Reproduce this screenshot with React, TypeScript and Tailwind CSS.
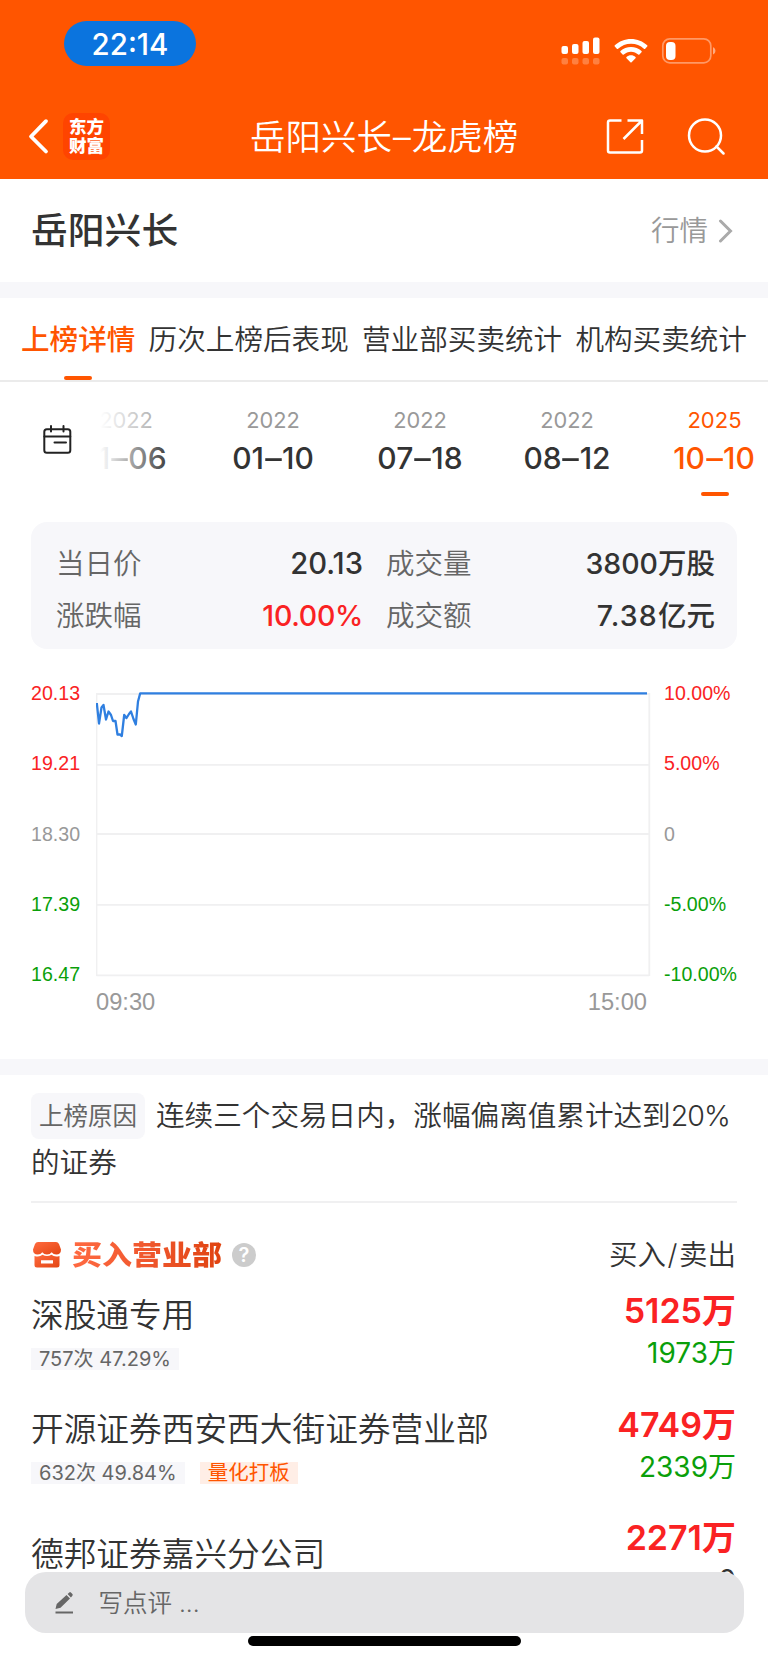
import type { ReactNode } from "react";

const dates = [
  { year: "2022", day: "11–06" },
  { year: "2022", day: "01–10" },
  { year: "2022", day: "07–18" },
  { year: "2022", day: "08–12" },
  { year: "2025", day: "10–10", active: true },
];

const axis = [
  { price: "20.13", pct: "10.00%", color: "text-[#fa2223]" },
  { price: "19.21", pct: "5.00%", color: "text-[#fa2223]" },
  { price: "18.30", pct: "0", color: "text-[#999]" },
  { price: "17.39", pct: "-5.00%", color: "text-[#0a9f0a]" },
  { price: "16.47", pct: "-10.00%", color: "text-[#0a9f0a]" },
];

const tabs = ["上榜详情", "历次上榜后表现", "营业部买卖统计", "机构买卖统计"];

function StatusBar() {
  return (
    <div className="flex h-[95px] items-start pl-16 pr-[52px]">
      <div className="mt-[21px] flex h-[45px] w-[132px] items-center justify-center rounded-full bg-[#0b74de] pt-0.5 text-[29.500px] font-medium leading-none">
        22:14
      </div>
      <svg className="ml-auto mt-[37px]" width="155" height="29" viewBox="0 0 155 29" fill="#fff">
        <rect x="0.5" y="9" width="6.500" height="8" rx="2" />
        <rect x="11" y="7" width="6.500" height="10" rx="2" />
        <rect x="21.5" y="4" width="6.500" height="13" rx="2" />
        <rect x="32" y="0.5" width="6.500" height="16.5" rx="2" />
        <g opacity="0.25">
          <rect x="0.5" y="21" width="6.500" height="6.5" rx="2" />
          <rect x="11" y="21" width="6.500" height="6.5" rx="2" />
          <rect x="21.5" y="21" width="6.500" height="6.5" rx="2" />
          <rect x="32" y="21" width="6.500" height="6.5" rx="2" />
        </g>
        <path d="M70 2c6.200 0 11.900 2.400 16.200 6.300.4.400.4.900 0 1.300l-2 2.100c-.4.400-.9.400-1.300 0A18.800 18.800 0 0 0 70 6.700c-5 0-9.500 1.900-12.900 5-.4.400-.9.400-1.300 0l-2-2.100c-.4-.4-.4-.9 0-1.300C58.100 4.400 63.800 2 70 2Z" />
        <path d="M70 10c4 0 7.700 1.500 10.500 4.100.4.400.4.800 0 1.200l-2.100 2.200c-.4.400-.8.400-1.200 0-1.900-1.700-4.400-2.800-7.200-2.800s-5.300 1.100-7.200 2.800c-.4.400-.8.400-1.200 0l-2.100-2.200c-.4-.4-.4-.8 0-1.200C62.300 11.500 66 10 70 10Z" />
        <path d="M70 18.300c1.700 0 3.300.6 4.500 1.700.4.300.4.800 0 1.200l-3.900 4.100c-.4.400-.8.400-1.200 0l-3.900-4.100c-.4-.4-.4-.9 0-1.200 1.200-1.100 2.800-1.700 4.500-1.700Z" />
        <rect x="101.800" y="1.800" width="48" height="24" rx="7" fill="none" stroke="#fff" strokeOpacity="0.4" strokeWidth="1.700" />
        <rect x="105" y="5" width="9.500" height="18" rx="4" />
        <path d="M152 10.200c1.600.6 2.400 2 2.400 3.600s-.8 3-2.400 3.600Z" opacity="0.5" />
      </svg>
    </div>
  );
}

function NavBar() {
  return (
    <div className="grid h-[84px] grid-cols-[222px_auto_1fr] items-center pl-7 pr-[43px]">
      <div className="flex items-center">
        <svg width="22" height="38" viewBox="0 0 22 38" fill="none" stroke="#fff" strokeWidth="3.800" strokeLinecap="round" strokeLinejoin="round">
          <path d="M18 3.200 3 18.500l15 15" />
        </svg>
        <div className="ml-[13px] -mt-0.5 size-[47px] rounded-[10px] bg-[#ff4400] pt-[3px] text-center font-['Noto_Sans_CJK_SC'] text-[17.500px] font-black leading-[19px]">
          东方
          <br />
          财富
        </div>
      </div>
      <div className="whitespace-nowrap pt-px text-[35.500px] font-[350] leading-none">
        岳阳兴长<span className="mx-px">–</span>龙虎榜
      </div>
      <div className="flex items-center justify-end gap-[43px]">
        <svg width="38" height="38" viewBox="0 0 38 38" fill="none" stroke="#fff" strokeWidth="2.500" strokeLinejoin="round" strokeLinecap="butt">
          <path d="M15.500 2.500H4Q2 2.500 2 4.500v28q0 2 2 2h30q2 0 2-2V22M21.500 2.500H36V16M35.500 3 17.500 21" />
        </svg>
        <svg width="38" height="38" viewBox="0 0 38 38" fill="none" stroke="#fff" strokeWidth="2.500">
          <circle cx="18" cy="17.500" r="16" />
          <path d="m29.500 28.500 7 7" strokeLinecap="round" />
        </svg>
      </div>
    </div>
  );
}

function DateStrip() {
  return (
    <div className="relative flex h-[140px] overflow-hidden pl-[52.500px]">
      {dates.map((d) => (
        <div
          key={d.day}
          className={
            d.active
              ? "flex w-[147px] shrink-0 flex-col items-center text-[#ff5500]"
              : "flex w-[147px] shrink-0 flex-col items-center text-[#333]"
          }
        >
          <span className={d.active ? "mt-[23px] pl-px text-[22px] leading-[31px]" : "mt-[23px] text-[21.800px] leading-[31px] text-[#999]"}>
            {d.year}
          </span>
          <span className="mt-[2px] text-[30px] font-medium leading-[40px]">
            {d.day.slice(0, 2)}
            <span className="mx-[1.500px] inline-block scale-x-110">–</span>
            {d.day.slice(3)}
          </span>
          {d.active && <span className="ml-0.5 mt-[14px] h-[3.500px] w-7 rounded-full bg-[#ff5500]" />}
        </div>
      ))}
      {/* left fade with the calendar button on top */}
      <div className="absolute inset-y-0 left-0 flex w-[172px]">
        <div className="w-[100px] bg-white pl-[42px] pt-[43px]">
          <svg width="30" height="30" viewBox="0 0 30 30" fill="none" stroke="#222" strokeWidth="2">
            <rect x="2.300" y="4.300" width="26" height="23.500" rx="2.500" />
            <path d="M2.300 11.500h26M9 1v5.500M21.500 1v5.500M12.500 17.500H24" strokeLinecap="round" />
          </svg>
        </div>
        <div className="flex-1 bg-linear-to-r from-white to-white/0" />
      </div>
    </div>
  );
}

function StatCell({ label, children }: { label: string; children: ReactNode }) {
  return (
    <div className="flex items-center justify-between">
      <span className="font-[350] text-[#666]">{label}</span>
      {children}
    </div>
  );
}

function PriceChart() {
  return (
    <div className="px-[31px] pt-[32px] font-['Liberation_Sans',Arial,sans-serif]">
      <div className="flex h-[307px]">
        <div className="flex w-[65px] flex-col text-[19.600px]">
          {axis.map((a) => (
            <span key={a.price} className={`${a.color} mb-[46.300px] leading-6`}>
              {a.price}
            </span>
          ))}
        </div>
        <svg className="mt-[10px] shrink-0" width="556" height="288" viewBox="0 0 556 288" fill="none">
          <path d="M.5 3H553M.5 73.800H553M.5 143H553M.5 213.800H553M.5 284.300H553M.5 2v283M553.300 2v283" stroke="#f0f0f1" strokeWidth="1.800" />
          <path
            d="M.8 12 3 32.500 5.500 16.500 7.500 14 10 28.500 12.500 20.500 15 24 17 30H19.500L21.500 43.500H24L25.800 45 28.200 24 30.500 27 33 23 35 20.500 37.500 28 39.800 33.500 42 10.500 44.200 2.300H551"
            stroke="#2f7fe0"
            strokeWidth="2.300"
            strokeLinejoin="round"
          />
        </svg>
        <div className="ml-[12px] flex flex-col text-[19.600px]">
          {axis.map((a) => (
            <span key={a.pct} className={`${a.color} mb-[46.300px] whitespace-nowrap leading-6`}>
              {a.pct}
            </span>
          ))}
        </div>
      </div>
      <div className="flex justify-between pl-[65px] pr-[90px] pt-px text-[23.700px] leading-[27px] text-[#999]">
        <span>09:30</span>
        <span>15:00</span>
      </div>
    </div>
  );
}

type BrokerProps = {
  name: string;
  stat?: string;
  tag?: string;
  buy: string;
  sell: string;
};

function Broker({ name, stat, tag, buy, sell }: BrokerProps) {
  return (
    <div className="flex h-[113.500px] justify-between">
      <div className={stat ? "" : "pt-[12px]"}>
        <div className="pt-[11px] text-[32.700px] font-[350] leading-[44px]">{name}</div>
        {stat && (
          <div className="mt-[11px] flex gap-[15px] text-[20px] leading-[22px]">
            <span className="h-[22px] bg-[#f7f7fa] px-2 text-[#666]">{stat}</span>
            {tag && <span className="h-[22px] bg-[#ffeee6] px-2 text-[20.500px] text-[#ff5500]">{tag}</span>}
          </div>
        )}
      </div>
      <div className="flex flex-col items-end pr-px">
        <span className="mt-[7px] text-[34px] font-semibold leading-[44px] text-[#fa2223]">{buy}</span>
        <span className={sell === "0" ? "mt-px text-[28px] leading-[38px]" : "mt-px text-[28px] leading-[38px] text-[#0a9f0a]"}>{sell}</span>
      </div>
    </div>
  );
}

export default function App() {
  return (
    <div className="relative h-[1663px] w-[768px] overflow-hidden bg-white font-['Inter','Noto_Sans_CJK_SC',sans-serif] text-[#333]">
      <header className="bg-[#ff5500] text-white">
        <StatusBar />
        <NavBar />
      </header>

      <div className="flex h-[103px] items-center justify-between pl-[31px] pr-[34px] pt-px">
        <h1 className="text-[36.800px] font-medium leading-none">岳阳兴长</h1>
        <div className="flex items-center text-[28.500px] font-[350] leading-none text-[#999]">
          行情
          <svg className="ml-2.5" width="16" height="24" viewBox="0 0 16 24" fill="none" stroke="#aaa" strokeWidth="3">
            <path d="m2.500 2 10 10-10 10" strokeLinecap="round" />
          </svg>
        </div>
      </div>
      <div className="h-4 bg-[#f7f7fa]" />

      <nav className="flex h-[84px] justify-between border-b-2 border-[#ebebeb] pl-[21px] pr-[21px] text-[28.600px] leading-[84px]">
        {tabs.map((tab, i) =>
          i === 0 ? (
            <span key={tab} className="relative font-medium text-[#ff5500]">
              {tab}
              <span className="absolute bottom-0 left-[43px] h-1 w-7 rounded-full bg-[#ff5500]" />
            </span>
          ) : (
            <span key={tab} className="font-[350]">
              {tab}
            </span>
          ),
        )}
      </nav>

      <DateStrip />

      <div className="mx-[31px] grid h-[127px] grid-cols-[307px_329px] content-center gap-x-[23px] gap-y-3 rounded-2xl bg-[#f7f7fa] pl-[25px] pt-[9px] text-[28.500px] leading-[40px]">
        <StatCell label="当日价">
          <span className="text-[29.200px] font-medium">20.13</span>
        </StatCell>
        <StatCell label="成交量">
          <span className="font-medium">3800万股</span>
        </StatCell>
        <StatCell label="涨跌幅">
          <span className="font-medium tracking-[-0.300px] text-[#fa2223]">10.00%</span>
        </StatCell>
        <StatCell label="成交额">
          <span className="font-medium">
            <span className="tracking-[1.200px]">7.38</span>亿元
          </span>
        </StatCell>
      </div>

      <PriceChart />

      <div className="mt-[42.500px] h-4 bg-[#f7f7fa]" />

      <section className="px-[31px]">
        <p className="pt-[17px] text-[28.600px] font-[350] leading-[47px]">
          <span className="-mt-2.5 mb-[-7px] mr-[11px] inline-flex h-[46px] w-[114px] items-center justify-center rounded-lg bg-[#f7f7fa] pt-px align-middle text-[24.500px] font-normal text-[#666]">
            上榜原因
          </span>
          连续三个交易日内，涨幅偏离值累计达到<span className="tracking-[-0.900px]">20%</span>的证券
        </p>

        <div className="mt-[15px] flex h-[81.500px] items-center border-t-2 border-[#f0f0f1] pt-[25px]">
          <svg className="ml-0.5" width="28" height="26" viewBox="0 0 28 26">
            <defs>
              <linearGradient id="shop" x1="0" y1="0" x2="1" y2="1">
                <stop offset="0" stopColor="#ff6b40" />
                <stop offset="1" stopColor="#e34512" />
              </linearGradient>
            </defs>
            <path d="M5 0h18q2 0 3 2l2 5.500q0 5-4.700 5-3 0-4.600-2.200Q17 12.500 14 12.500t-4.700-2.200Q7.700 12.500 4.700 12.500 0 12.500 0 7.500L2 2Q3 0 5 0Z" fill="url(#shop)" />
            <path
              fillRule="evenodd"
              d="M1.500 14q5 1.500 8-1.300 4.500 2.800 9 0 3 2.800 8 1.300V23q0 2.500-2.500 2.500H4Q1.500 25.500 1.500 23ZM8 18.300V21.500H20V18.300Z"
              fill="url(#shop)"
            />
          </svg>
          <span className="-mt-[3px] ml-[11px] scale-y-90 bg-linear-to-r from-[#ff6a42] to-[#e0430f] bg-clip-text font-['Noto_Sans_CJK_SC'] text-[30px] font-black leading-[40px] text-transparent">
            买入营业部
          </span>
          <span className="ml-[10px] flex size-6 items-center justify-center rounded-full bg-[#ccc] text-[20px] font-semibold leading-none text-white">
            ?
          </span>
          <span className="ml-auto pr-px text-[28.500px] font-[350] leading-none">
            买入<span className="mx-[1.500px]">/</span>卖出
          </span>
        </div>

        <Broker name="深股通专用" stat="757次 47.29%" buy="5125万" sell="1973万" />
        <Broker name="开源证券西安西大街证券营业部" stat="632次 49.84%" tag="量化打板" buy="4749万" sell="2339万" />
        <Broker name="德邦证券嘉兴分公司" buy="2271万" sell="0" />
      </section>

      {/* comment bar floats over the list */}
      <div className="absolute bottom-[30px] left-[24.500px] flex h-[61px] w-[719px] items-center rounded-[21px] bg-[#e4e4e6] pl-[30px] pt-px text-[24.500px] text-[#666]">
        <svg width="19" height="24" viewBox="0 0 19 24" fill="#666">
          <path d="m.5 18 1.200-5L11.500 4l3.500 3.500L5.500 16.800ZM12.600 3l1.700-1.600q.8-.7 1.600.1l1.500 1.600q.7.800 0 1.600L15.900 6.400Z" />
          <rect x="0.500" y="20.500" width="17.500" height="2" />
        </svg>
        <span className="ml-[25px] font-[350]">写点评 ...</span>
      </div>
      <div className="absolute bottom-[17px] left-[248px] h-[10px] w-[273px] rounded-full bg-black" />
    </div>
  );
}
